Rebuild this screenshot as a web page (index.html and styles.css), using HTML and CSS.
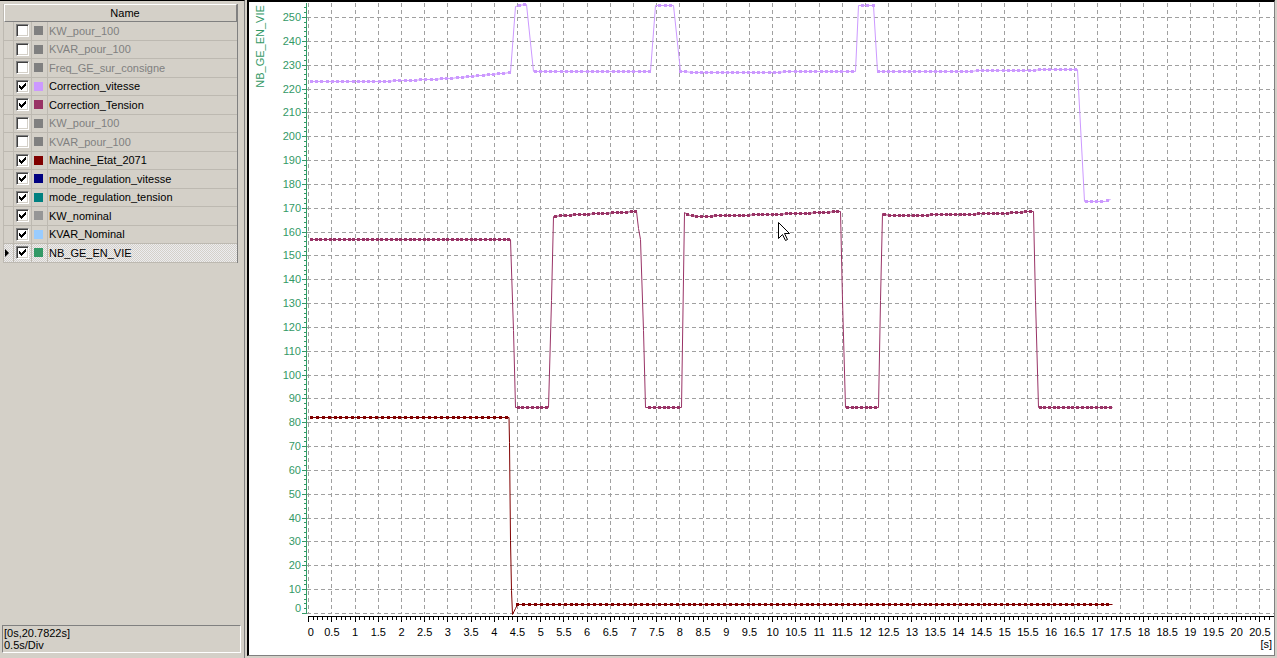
FILE: index.html
```html
<!DOCTYPE html>
<html lang="fr">
<head>
<meta charset="utf-8">
<title>Courbes</title>
<link rel="stylesheet" href="styles.css">
</head>
<body>
<div class="app">
  <aside class="side">
    <div class="list">
      <div class="head">Name</div>
      <div class="row off"><span class="c0"></span><span class="c1"><span class="cb"></span></span><span class="c2"><i class="sw gray"></i></span><span class="c3">KW_pour_100</span></div>
      <div class="row off"><span class="c0"></span><span class="c1"><span class="cb"></span></span><span class="c2"><i class="sw gray"></i></span><span class="c3">KVAR_pour_100</span></div>
      <div class="row off"><span class="c0"></span><span class="c1"><span class="cb"></span></span><span class="c2"><i class="sw gray"></i></span><span class="c3">Freq_GE_sur_consigne</span></div>
      <div class="row"><span class="c0"></span><span class="c1"><span class="cb"><svg viewBox="0 0 11 11"><path d="M8 2h1v1h-1zM7 3h2v1h-2zM2 4h1v1h-1zM6 4h3v1h-3zM2 5h2v1h-2zM5 5h3v1h-3zM2 6h5v1h-5zM3 7h3v1h-3zM4 8h1v1h-1z"/></svg></span></span><span class="c2"><i class="sw lavender"></i></span><span class="c3">Correction_vitesse</span></div>
      <div class="row"><span class="c0"></span><span class="c1"><span class="cb"><svg viewBox="0 0 11 11"><path d="M8 2h1v1h-1zM7 3h2v1h-2zM2 4h1v1h-1zM6 4h3v1h-3zM2 5h2v1h-2zM5 5h3v1h-3zM2 6h5v1h-5zM3 7h3v1h-3zM4 8h1v1h-1z"/></svg></span></span><span class="c2"><i class="sw plum"></i></span><span class="c3">Correction_Tension</span></div>
      <div class="row off"><span class="c0"></span><span class="c1"><span class="cb"></span></span><span class="c2"><i class="sw gray"></i></span><span class="c3">KW_pour_100</span></div>
      <div class="row off"><span class="c0"></span><span class="c1"><span class="cb"></span></span><span class="c2"><i class="sw gray"></i></span><span class="c3">KVAR_pour_100</span></div>
      <div class="row"><span class="c0"></span><span class="c1"><span class="cb"><svg viewBox="0 0 11 11"><path d="M8 2h1v1h-1zM7 3h2v1h-2zM2 4h1v1h-1zM6 4h3v1h-3zM2 5h2v1h-2zM5 5h3v1h-3zM2 6h5v1h-5zM3 7h3v1h-3zM4 8h1v1h-1z"/></svg></span></span><span class="c2"><i class="sw maroon"></i></span><span class="c3">Machine_Etat_2071</span></div>
      <div class="row"><span class="c0"></span><span class="c1"><span class="cb"><svg viewBox="0 0 11 11"><path d="M8 2h1v1h-1zM7 3h2v1h-2zM2 4h1v1h-1zM6 4h3v1h-3zM2 5h2v1h-2zM5 5h3v1h-3zM2 6h5v1h-5zM3 7h3v1h-3zM4 8h1v1h-1z"/></svg></span></span><span class="c2"><i class="sw navy"></i></span><span class="c3">mode_regulation_vitesse</span></div>
      <div class="row"><span class="c0"></span><span class="c1"><span class="cb"><svg viewBox="0 0 11 11"><path d="M8 2h1v1h-1zM7 3h2v1h-2zM2 4h1v1h-1zM6 4h3v1h-3zM2 5h2v1h-2zM5 5h3v1h-3zM2 6h5v1h-5zM3 7h3v1h-3zM4 8h1v1h-1z"/></svg></span></span><span class="c2"><i class="sw teal"></i></span><span class="c3">mode_regulation_tension</span></div>
      <div class="row"><span class="c0"></span><span class="c1"><span class="cb"><svg viewBox="0 0 11 11"><path d="M8 2h1v1h-1zM7 3h2v1h-2zM2 4h1v1h-1zM6 4h3v1h-3zM2 5h2v1h-2zM5 5h3v1h-3zM2 6h5v1h-5zM3 7h3v1h-3zM4 8h1v1h-1z"/></svg></span></span><span class="c2"><i class="sw silver"></i></span><span class="c3">KW_nominal</span></div>
      <div class="row"><span class="c0"></span><span class="c1"><span class="cb"><svg viewBox="0 0 11 11"><path d="M8 2h1v1h-1zM7 3h2v1h-2zM2 4h1v1h-1zM6 4h3v1h-3zM2 5h2v1h-2zM5 5h3v1h-3zM2 6h5v1h-5zM3 7h3v1h-3zM4 8h1v1h-1z"/></svg></span></span><span class="c2"><i class="sw sky"></i></span><span class="c3">KVAR_Nominal</span></div>
      <div class="row sel"><span class="c0"><i class="ind"></i></span><span class="c1"><span class="cb"><svg viewBox="0 0 11 11"><path d="M8 2h1v1h-1zM7 3h2v1h-2zM2 4h1v1h-1zM6 4h3v1h-3zM2 5h2v1h-2zM5 5h3v1h-3zM2 6h5v1h-5zM3 7h3v1h-3zM4 8h1v1h-1z"/></svg></span></span><span class="c2"><i class="sw sea"></i></span><span class="c3">NB_GE_EN_VIE</span></div>
    </div>
    <div class="status">[0s,20.7822s]<br>0.5s/Div</div>
  </aside>
  <main class="chart">
    <svg id="plot" viewBox="249 2 1025 653" width="1025" height="653" xmlns="http://www.w3.org/2000/svg"></svg>
  </main>
</div>
<script src="script.js"></script>
</body>
</html>
```

FILE: styles.css
```css
* { box-sizing: border-box; margin: 0; padding: 0; }
html, body { width: 1277px; height: 658px; overflow: hidden; }
body {
  background: #d4d0c8;
  font-family: "Liberation Sans", Arial, sans-serif;
  font-size: 11px;
  color: #000;
}
.app { display: flex; width: 1277px; height: 658px; }

/* left panel */
.side {
  flex: none;
  width: 245px;
  height: 658px;
  border-top: 1px solid #000;
  border-right: 1px solid #808080;
  display: flex;
  flex-direction: column;
  padding: 3px 0 5px 3px;
}
.list {
  width: 235px;
  border-left: 1px solid #bdb9b1;
  border-right: 1px solid #808080;
}
.head {
  height: 18px;
  border: 1px solid;
  border-color: #fff #808080 #808080 #fff;
  line-height: 16px;
  text-align: center;
  padding-left: 9px;
}
.row {
  display: flex;
  height: 18.5px;
  border-bottom: 1px solid #bdb9b1;
}
.row > span { display: flex; align-items: center; }
.c0 { width: 10px; border-right: 1px solid #bdb9b1; }
.c1 { width: 18px; padding-left: 2px; border-right: 1px solid #bdb9b1; }
.c2 { width: 16px; padding-left: 2px; border-right: 1px solid #bdb9b1; }
.c3 { flex: 1; padding-left: 1px; white-space: nowrap; }
.off .c3 { color: #808080; }
.sel { background: repeating-conic-gradient(#ececf0 0 25%, #d4d0c8 0 50%) 0 0 / 2px 2px; }
.ind {
  display: block;
  width: 0; height: 0;
  margin-left: 1px;
  border-left: 4px solid #000;
  border-top: 4px solid transparent;
  border-bottom: 4px solid transparent;
}
.cb {
  display: block;
  width: 13px; height: 13px;
  background: #fff;
  border: 1px solid;
  border-color: #808080 #fff #fff #808080;
  box-shadow: inset 1px 1px 0 #404040, inset -1px -1px 0 #d4d0c8;
}
.cb svg { display: block; width: 11px; height: 11px; shape-rendering: crispEdges; }
.cb path { fill: #000; }
.sw { display: block; width: 9px; height: 9px; }
.gray { background: #808080; }
.lavender { background: #cc99ff; }
.plum { background: #993366; }
.maroon { background: #800000; }
.navy { background: #000080; }
.teal { background: #008080; }
.silver { background: #969696; }
.sky { background: #99ccff; }
.sea { background: #339966; }

.status {
  margin-top: auto;
  margin-left: -1px;
  width: 239px;
  height: 28px;
  border: 1px solid;
  border-color: #808080 #fff #fff #808080;
  line-height: 12px;
  padding: 1px 0 0 1px;
}

/* chart */
.chart {
  flex: none;
  margin-left: 2px;
  width: 1028px;
  height: 656px;
  background: #fff;
  border-style: solid;
  border-width: 2px 1px 1px 2px;
  border-color: #000 #808080 #808080 #000;
}
.chart svg {
  display: block;
  width: 1025px;
  height: 653px;
  font-family: "Liberation Sans", Arial, sans-serif;
  font-size: 11px;
}
.grid line { stroke: #a0a0a0; stroke-dasharray: 4 3; shape-rendering: crispEdges; }
.yaxis line { stroke: #339966; shape-rendering: crispEdges; }
.ylab, .ytitle { fill: #339966; }
.xaxis line { stroke: #000; shape-rendering: crispEdges; }
.xlab, .unit { fill: #000; }
.series polyline { fill: none; stroke-width: 1; }
.series rect { shape-rendering: crispEdges; }
.s-vit polyline { stroke: #cc99ff; }
.s-vit rect { fill: #cc99ff; }
.s-ten polyline { stroke: #993366; }
.s-ten rect { fill: #993366; }
.s-mac polyline { stroke: #800000; }
.s-mac rect { fill: #800000; }
.cursor { fill: #fff; stroke: #000; stroke-width: 1; stroke-linejoin: miter; }
```

FILE: script.js
```js
(function () {
  var NS = 'http://www.w3.org/2000/svg';
  var svg = document.getElementById('plot');
  function el(tag, attrs, parent) {
    var e = document.createElementNS(NS, tag);
    for (var k in attrs) e.setAttribute(k, attrs[k]);
    (parent || svg).appendChild(e);
    return e;
  }
  var X0 = 308.2, SX = 46.4, Y0 = 613, SY = 2.384;
  function xt(t) { return X0 + t * SX; }
  function yv(v) { return Y0 - v * SY; }
  function px(a) { return Math.round(a) + 0.5; }
  var v, i, k, x, y, t;

  // grid
  var grid = el('g', { 'class': 'grid' });
  for (v = 0; v <= 250; v += 10) { y = px(yv(v)); el('line', { x1: 307, x2: 1274, y1: y, y2: y }, grid); }
  for (i = 0; i <= 41; i++) { x = px(xt(i / 2)); el('line', { x1: x, x2: x, y1: 3, y2: 614 }, grid); }

  // y axis
  var ya = el('g', { 'class': 'yaxis' });
  el('line', { x1: 306.5, x2: 306.5, y1: 3, y2: 614 }, ya);
  for (v = 0; v <= 254; v += 2) {
    y = px(yv(v));
    el('line', { x1: v % 10 === 0 ? 302 : 304, x2: 306, y1: y, y2: y }, ya);
  }
  for (v = 0; v <= 250; v += 10) {
    t = el('text', { x: 301, y: (v === 0 ? yv(v) - 5 : yv(v)) + 4, 'text-anchor': 'end', 'class': 'ylab' }, ya);
    t.textContent = String(v);
  }
  t = el('text', { 'class': 'ytitle', 'text-anchor': 'middle', transform: 'translate(264,46.5) rotate(-90)' }, ya);
  t.textContent = 'NB_GE_EN_VIE';

  // x axis
  var xa = el('g', { 'class': 'xaxis' });
  el('line', { x1: 308, x2: 1274, y1: 616.5, y2: 616.5 }, xa);
  for (k = 0; k <= 210; k++) {
    x = px(xt(k / 10));
    if (x > 1273) break;
    el('line', { x1: x, x2: x, y1: 617, y2: k % 5 === 0 ? 622 : 620 }, xa);
  }
  for (i = 0; i <= 41; i++) {
    t = el('text', { x: xt(i / 2) + (i === 0 ? 2.5 : 0.5), y: 636, 'text-anchor': 'middle', 'class': 'xlab' }, xa);
    t.textContent = String(i / 2);
  }
  t = el('text', { x: 1272, y: 648, 'text-anchor': 'end', 'class': 'unit' }, xa);
  t.textContent = '[s]';

  // series
  function seg(kp, xx) {
    for (var j = 0; j < kp.length - 1; j++) {
      if (xx <= kp[j + 1][0]) return j;
    }
    return kp.length - 2;
  }
  function interp(kp, xx) {
    var j = seg(kp, xx), a = kp[j], b = kp[j + 1];
    var f = (xx - a[0]) / (b[0] - a[0]);
    return a[1] + f * (b[1] - a[1]);
  }
  function steep(kp, xx) {
    var j = seg(kp, xx), a = kp[j], b = kp[j + 1];
    return Math.abs((b[1] - a[1]) / (b[0] - a[0])) > 3;
  }
  function series(kp, step, cls) {
    var g = el('g', { 'class': 'series ' + cls });
    var marks = [];
    var x0 = kp[0][0], x1 = kp[kp.length - 1][0];
    for (var xx = x0; xx <= x1 + 0.01; xx += step) {
      if (!steep(kp, xx)) marks.push([xx, interp(kp, xx)]);
    }
    var all = kp.concat(marks).slice();
    all.sort(function (a, b) { return a[0] - b[0]; });
    var pts = all.map(function (p) { return (p[0] + 0.5).toFixed(2) + ',' + (Math.round(p[1]) + 0.5); }).join(' ');
    el('polyline', { points: pts }, g);
    marks.forEach(function (p) {
      el('rect', { x: Math.round(p[0]) - 1, y: Math.round(p[1]) - 1, width: 3, height: 3 }, g);
    });
  }

  series([[311, 81], [378, 81], [400, 80], [430, 79], [460, 77], [490, 74], [510, 72], [515, 6], [519, 5], [526, 4], [533, 71],
    [650, 71], [655, 5], [673, 5], [680, 71], [700, 72], [760, 72], [800, 71], [855, 71], [858, 5], [873, 5], [877, 71],
    [950, 71], [1000, 70], [1077, 69], [1084, 201], [1105, 201], [1110, 199]], 5.2, 's-vit');

  series([[311, 239], [510, 239], [513, 330], [515, 407], [548, 407], [551, 300], [553, 216], [560, 215], [580, 214], [600, 213],
    [620, 212], [636, 211], [638, 228], [640, 239], [643, 330], [645, 407], [681, 407], [684, 212], [690, 215], [700, 216],
    [730, 215], [770, 214], [800, 213], [820, 212], [840, 211], [842, 300], [845, 407], [878, 407], [880, 300], [882, 213],
    [890, 215], [910, 215], [950, 214], [1000, 213], [1033, 211], [1035, 300], [1038, 407], [1112, 407]], 4.7, 's-ten');

  series([[311, 417], [508.5, 417], [509, 442], [510, 540], [511, 590], [512, 614], [515, 608], [517, 604], [1112, 604]], 5.9, 's-mac');

  // mouse cursor
  el('path', { 'class': 'cursor', d: 'M0 0V16L4 12L7 18L9 17L6 11H11Z', transform: 'translate(778.5,222.5)' });
})();
```
